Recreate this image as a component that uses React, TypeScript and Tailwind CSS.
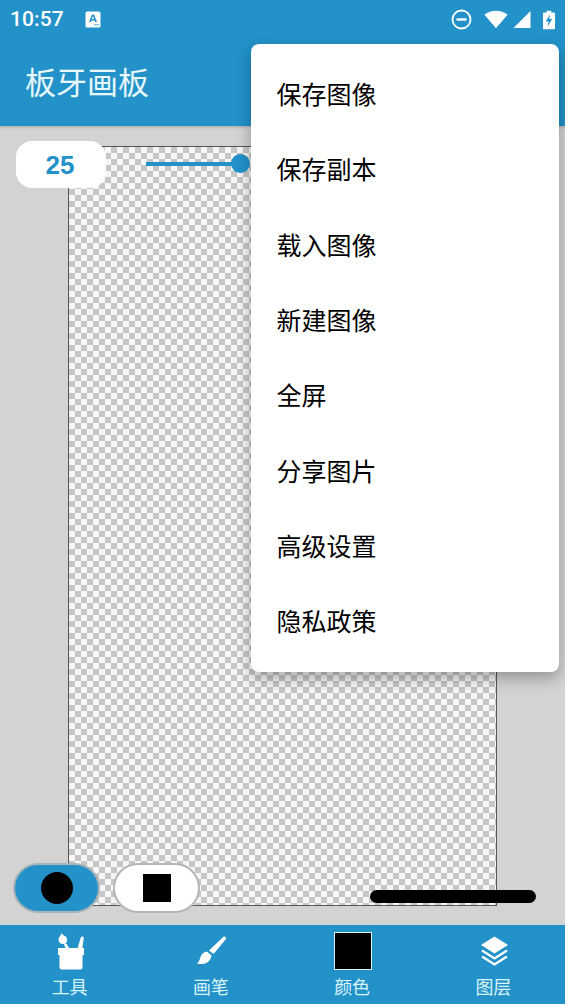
import * as React from 'react';

const menuItems = ['保存图像', '保存副本', '载入图像', '新建图像', '全屏', '分享图片', '高级设置', '隐私政策'];

const cjk = "font-['Noto_Sans_CJK_SC','Noto_Sans',sans-serif]";

function StatusBar() {
  return (
    <div className="h-[39px] flex items-center pl-[10px] pr-[10px] text-white">
      <span className="font-['Roboto',sans-serif] font-medium text-[21px] leading-none tracking-[0.1px]">10:57</span>
      <svg className="ml-[21px]" width="16" height="17" viewBox="0 0 16 17">
        <path fill="#fff" d="M2 0.5h12a1.5 1.5 0 0 1 1.5 1.5v13a1.5 1.5 0 0 1-1.500 1.500H2A1.500 1.500 0 0 1 0.500 15V2A1.500 1.500 0 0 1 2 0.500z" />
        <path fill="#2292c9" d="M7 3.500h2l3 7.500h-1.800l-.6-1.600H6.400L5.800 11H4zM6.900 8h2.200L8 5z" />
        <rect x="9" y="13" width="5" height="1.500" fill="#2292c9" opacity="0.5" />
      </svg>
      <div className="ml-auto flex items-center">
        <svg width="21" height="21" viewBox="0 0 21 21" fill="none" stroke="#fff" strokeWidth="1.8">
          <circle cx="10.500" cy="10.500" r="9" />
          <path d="M5.500 10.500h10" strokeWidth="2.400" />
        </svg>
        <svg className="ml-[12px]" width="24" height="19" viewBox="0 0 25 19">
          <path fill="#fff" d="M12.500 18.500 0.500 4.600C3.800 1.900 8 0.500 12.500 0.500s8.700 1.400 12 4.100z" />
        </svg>
        <svg className="ml-[5px]" width="18" height="19" viewBox="0 0 19 19">
          <path fill="#fff" d="M0.500 18.500 18.500 0.500v18z" />
        </svg>
        <svg className="ml-[12px]" width="12" height="20" viewBox="0 0 13 20">
          <path fill="#fff" d="M4 0h5v2h3a1 1 0 0 1 1 1v16a1 1 0 0 1-1 1H1a1 1 0 0 1-1-1V3a1 1 0 0 1 1-1h3z" />
          <path fill="#2292c9" d="M7.500 4 3 11.500h3L5 17l5-8H6.800z" />
        </svg>
      </div>
    </div>
  );
}

function PaintIcon() {
  return (
    <svg width="28" height="38" viewBox="0 0 28 38">
      <path fill="#fff" d="M4.500 1c.4 1.600 2 2 3.800 3.200C10 5.500 10.500 7 10 9c-.5 2-2.300 3.300-4.500 3.100C3 11.800 1.200 9.800 1.500 7.200 1.700 5.200 4 3.500 4.500 1z" />
      <path fill="#fff" d="M7 12.500l2.200-1.200 3.800 6.200H9zM20 18l3.800-12.500c.7-1.500 2.900-1 3 .6L25 18z" />
      <path fill="#fff" d="M1 16h26v7h-1.500v12.500a2 2 0 0 1-2 2h-19a2 2 0 0 1-2-2V23H1z" />
    </svg>
  );
}

function BrushIcon() {
  return (
    <svg width="32" height="31" viewBox="0 0 32 31">
      <path fill="#fff" d="M27.500 0.800c1.200-.9 3.500.9 2.500 2.300L17.500 18 13 14.500z" />
      <path fill="#fff" d="M11 15.500l4.500 4c-.4 3.200-2 6-5 7.400-2.700 1.300-6 1.300-9.500.5 2-1.500 2.500-3.500 3.300-6 1-3.300 3.200-5.500 6.700-5.900z" />
    </svg>
  );
}

function LayersIcon() {
  return (
    <svg width="29" height="30" viewBox="0 0 29 30">
      <path fill="#fff" d="M14.500 0.500 28 9 14.500 17.500 1 9z" />
      <path fill="none" stroke="#fff" strokeWidth="2.200" d="M2 14.500l12.500 8 12.500-8M2 20.500l12.500 8 12.500-8" />
    </svg>
  );
}

function NavItem({ icon, label }: { icon: React.ReactNode; label: string }) {
  return (
    <div className="flex-1 flex flex-col items-center">
      <div className="h-[46px] flex items-center justify-center">{icon}</div>
      <span className={`${cjk} text-[18px] leading-[24px] text-[#d9f3fb] -translate-x-[1px]`}>{label}</span>
    </div>
  );
}

export default function App() {
  return (
    <div className={`relative w-[565px] h-[1004px] overflow-hidden bg-[#d3d3d3] flex flex-col ${cjk}`}>
      <header className="h-[126px] shrink-0 bg-[#2292c9] shadow-[0_1px_3px_rgba(0,0,0,0.2)]">
        <StatusBar />
        <h1 className="pl-[25px] mt-[4px] text-[31px] leading-[76px] font-normal text-[#e8f8fc]">板牙画板</h1>
      </header>

      <main className="flex-1 relative pt-[20px] pb-[19px] pl-[68px] pr-[68px]">
        <div className="h-full border border-[#555] bg-white bg-[conic-gradient(#c6c6c6_25%,#f6f6f6_0_50%,#c6c6c6_0_75%,#f6f6f6_0)] bg-[length:12px_12px]" />

        <div className="absolute left-[16px] top-[15px] w-[90px] h-[47px] rounded-[16px] bg-white flex items-center justify-center">
          <span className="font-['Liberation_Sans',sans-serif] font-bold text-[26px] leading-none text-[#2292c9] -translate-x-[1px]">25</span>
        </div>

        <div className="absolute left-[146px] top-[36px] w-[90px] h-[4px] bg-[#2292c9]" />
        <div className="absolute left-[231px] top-[28px] w-[19px] h-[19px] rounded-full bg-[#2292c9]" />

        <div className="absolute left-[13px] top-[737px] w-[87px] h-[50px] rounded-full bg-[#2292c9] border-2 border-[#a9b4ba] flex items-center justify-center">
          <div className="w-[32px] h-[32px] rounded-full bg-black" />
        </div>
        <div className="absolute left-[113px] top-[737px] w-[87px] h-[50px] rounded-full bg-white border-2 border-[#b5b5b5] flex items-center justify-center">
          <div className="w-[28px] h-[28px] bg-black" />
        </div>
        <div className="absolute left-[370px] top-[764px] w-[166px] h-[13px] rounded-full bg-black" />
      </main>

      <nav className="h-[79px] shrink-0 bg-[#2292c9] flex pt-[3px]">
        <NavItem icon={<PaintIcon />} label="工具" />
        <NavItem icon={<BrushIcon />} label="画笔" />
        <NavItem icon={<div className="w-[38px] h-[38px] bg-black border border-[#d9f3fb]" />} label="颜色" />
        <NavItem icon={<LayersIcon />} label="图层" />
      </nav>

      <div className="absolute left-[251px] top-[44px] w-[308px] h-[628px] rounded-[8px] bg-white shadow-[0_6px_16px_rgba(0,0,0,0.3)] py-[12px]">
        {menuItems.map((item) => (
          <div key={item} className="h-[75.3px] flex items-center pl-[25.5px] text-[25px] leading-none text-black">
            {item}
          </div>
        ))}
      </div>
    </div>
  );
}
